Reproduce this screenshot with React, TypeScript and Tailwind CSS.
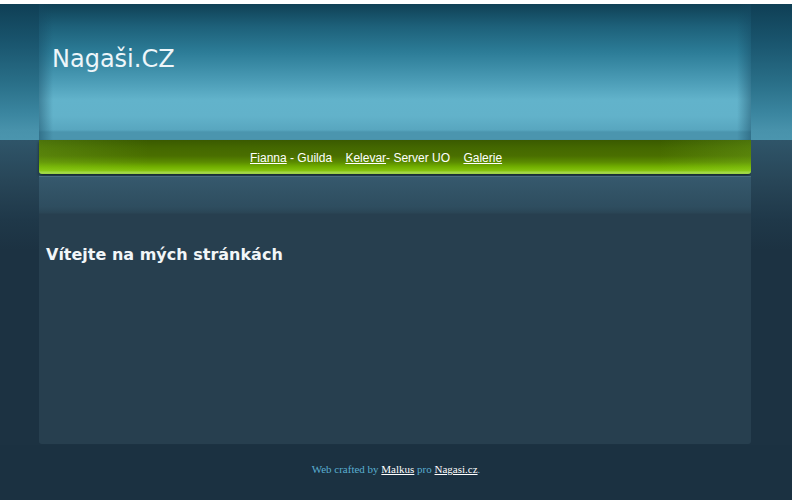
import React from "react";

export default function App() {
  return (
    <div className="w-[792px] h-[504px] overflow-hidden bg-white flex flex-col">
      <div className="h-[4px] w-full bg-white" />
      {/* Header */}
      <div className="flex h-[136px] w-full">
        <div className="w-[39px] h-full bg-[linear-gradient(to_bottom,#0f3f55_0px,#1a566f_40px,#2a7089_80px,#3b86a0_110px,#4892ab_126px,#4b95ae_136px)]" />
        <div className="w-[712px] h-full bg-[linear-gradient(to_right,rgba(20,70,95,0.45),rgba(20,70,95,0)_14px,rgba(20,70,95,0)_698px,rgba(20,70,95,0.45)),linear-gradient(to_bottom,#0f4055_0px,#1d6079_22px,#2c7c97_48px,#4a9bb5_76px,#62b3cb_96px,#62b2ca_112px,#58a6bf_126px,#4b95ae_128px,#4b95ae_136px)]">
          <div className="pt-[41px] pl-[13px] text-[24px] leading-[28px] text-[#eef6fa] [font-family:'DejaVu_Sans',sans-serif]">
            Nagaši.CZ
          </div>
        </div>
        <div className="flex-1 h-full bg-[linear-gradient(to_bottom,#0f3f55_0px,#1a566f_40px,#2a7089_80px,#3b86a0_110px,#4892ab_126px,#4b95ae_136px)]" />
      </div>

      {/* Main */}
      <div className="flex h-[305px] w-full bg-[#1c3242]">
        <div className="w-[39px] h-full bg-[linear-gradient(to_bottom,#2f5569_0px,#284658_40px,#1f3849_80px,#1c3242_110px,#1c3242)]" />
        <div className="w-[712px] h-full flex flex-col bg-[linear-gradient(to_bottom,#2f5569_0px,#2f5569_40px,#1c3242_41px)]">
          <div className="h-[34px] rounded-b-[3px] shadow-[0_2px_3px_rgba(0,0,0,0.55)] bg-[linear-gradient(to_right,rgba(160,230,60,0.18),rgba(160,230,60,0)_110px,rgba(160,230,60,0)_620px,rgba(160,230,60,0.18)),linear-gradient(to_bottom,#3a5a00_0px,#446800_8px,#4a6f00_16px,#5a8a00_22px,#72b000_27px,#86c410_31px,#a3d84a_32px,#9bd040_34px)] flex items-center">
            <div className="pl-[211px] pt-[2px] text-[12px] leading-[14px] text-white [font-family:'Liberation_Sans',Arial,sans-serif] whitespace-pre">
              <a className="underline">Fianna</a>
              <span> - Guilda    </span>
              <a className="underline">Kelevar</a>
              <span>- Server UO    </span>
              <a className="underline">Galerie</a>
            </div>
          </div>
          <div className="mt-[2px] h-[268px] rounded-b-[3px] border-t border-[#4a6d81] bg-[linear-gradient(to_bottom,#36596d_0px,#2e4d5f_30px,#2a4555_36px,#273f4f_37px,#273f4f)]">
            <h1 className="pt-[68px] pl-[7px] text-[16px] leading-[20px] font-bold text-[#f2f6f8] [font-family:'DejaVu_Sans',Verdana,sans-serif]">
              Vítejte na mých stránkách
            </h1>
          </div>
        </div>
        <div className="flex-1 h-full bg-[linear-gradient(to_bottom,#2f5569_0px,#284658_40px,#1f3849_80px,#1c3242_110px,#1c3242)]" />
      </div>

      {/* Footer */}
      <div className="h-[55px] w-full bg-[#1b3141] flex justify-center pt-[18px]">
        <div className="text-[11px] leading-[13px] text-[#5aaed0] [font-family:'Liberation_Serif','Times_New_Roman',serif]">
          Web crafted by <a className="underline text-white">Malkus</a> pro{" "}
          <a className="underline text-white">Nagasi.cz</a>.
        </div>
      </div>
      <div className="flex-1 w-full bg-white" />
    </div>
  );
}
